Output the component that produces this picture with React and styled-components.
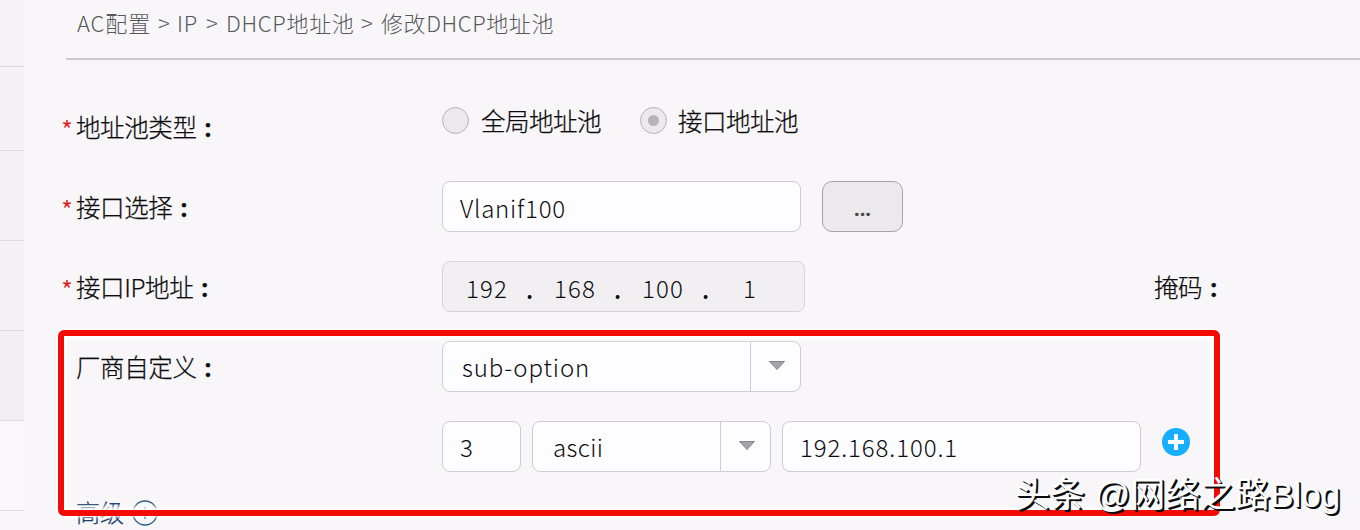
import * as React from 'react'
import styled, { createGlobalStyle } from "styled-components"

const GlobalStyle = createGlobalStyle`
* {box-sizing:border-box;}
body {margin:0; background-color:#f8f6f9; overflow:hidden; font-family:"Noto Sans CJK SC", sans-serif; font-weight:300; color:#0c0c0e;}
`;

const Page = styled.div`
display:flex;
position:relative;
width:1360px;
height:530px;
overflow:hidden;
`;

const Sidebar = styled.div`
flex:0 0 24px;
display:flex;
flex-direction:column;
`;

const SidebarItem = styled.div`
flex:0 0 ${props => props.$height}px;
background-color:${props => props.$color};
border-bottom:1px solid #dcdadd;
`;

const Main = styled.div`
flex:1;
min-width:0;
display:flex;
flex-direction:column;
padding-left:38px;
`;

const Breadcrumb = styled.div`
display:flex;
flex:none;
height:60px;
margin-left:4px;
padding:5px 0 0 11px;
border-bottom:2px solid #cbc9ce;
color:#58585c;
line-height:35px;
white-space:nowrap;
`;

const Crumb = styled.span`
flex:none;
width:${props => props.$width}px;
font-size:22px;
letter-spacing:${props => props.$spacing || 0}px;
`;

const Form = styled.div`
display:flex;
flex-direction:column;
gap:29px;
padding-top:41px;
`;

const Row = styled.div`
display:flex;
flex:none;
height:51px;
`;

const Label = styled.div`
display:flex;
flex:0 0 380px;
height:51px;
font-size:24.5px;
line-height:51px;
letter-spacing:-.4px;
-webkit-text-stroke:.25px currentColor;
white-space:nowrap;
`;

const Required = styled.span`
flex:0 0 14px;
padding-top:3px;
color:#e01818;
font-size:27px;
letter-spacing:0;
margin-left:-1px;
margin-right:1px;
`;

const Colon = styled.b`
font-weight:700;
font-family:"Noto Sans", sans-serif;
margin-left:8px;
padding-top:1px;
`;

const Radio = styled.div`
display:flex;
flex:none;
align-items:center;
height:27px;
margin-top:6px;
width:${props => props.$width}px;
font-size:24.5px;
letter-spacing:-.5px;
-webkit-text-stroke:.25px currentColor;
white-space:nowrap;
`;

const RadioDot = styled.i`
display:flex;
align-items:center;
justify-content:center;
width:27px;
height:27px;
margin-right:${props => props.$gap}px;
border:1px solid #b5b2b6;
border-radius:50%;
background-color:#ebe9ec;
&::after {content:""; width:11px; height:11px; border-radius:50%; background-color:${props => props.$checked ? "#b8b2b4" : "transparent"};}
`;

const Field = styled.div`
display:flex;
flex:none;
align-items:center;
width:${props => props.$width}px;
height:51px;
margin-right:${props => props.$gap || 0}px;
padding-left:${props => props.$pad || 17}px;
padding-top:${props => props.$drop || 0}px;
border:1px solid ${props => props.$disabled ? "#d5d3d8" : "#ceccd1"};
border-radius:8px;
background-color:${props => props.$disabled ? "#f1eff2" : "#fdfcfe"};
font-size:24px;
letter-spacing:${props => props.$spacing || 0}px;
white-space:nowrap;
`;

const IpPart = styled.span`
flex:none;
width:${props => props.$width}px;
`;

const IpDot = styled(IpPart)`
padding-top:3px;
font-weight:500;
`;

const Select = styled(Field)`
justify-content:space-between;
`;

const Arrow = styled.span`
display:flex;
align-items:center;
justify-content:center;
width:50px;
height:49px;
padding-bottom:1px;
padding-left:2px;
border-left:1px solid #d0ced3;
`;

const MoreButton = styled.button`
width:81px;
height:51px;
padding:3px 0 0;
border:1px solid #a5a3a7;
border-radius:10px;
background-color:#ebe9ec;
color:#48484c;
font:700 20px "Noto Sans", sans-serif;
`;

const AddIcon = styled.svg`
margin:7px 0 0 21px;
`;

const Advanced = styled.div`
display:flex;
align-items:center;
gap:8px;
height:36px;
margin-top:-6px;
padding-left:14px;
color:#173f6b;
font-size:24px;
line-height:34px;
-webkit-text-stroke:.25px currentColor;
span {padding-bottom:3px;}
`;

/* red highlight around the vendor options */
const Highlight = styled.div`
position:absolute;
left:58px;
top:330px;
width:1162px;
height:186px;
border:6px solid #f30b05;
border-radius:6px;
box-shadow:0 0 3px 1px #fff, inset 0 0 4px 3px #fff;
`;

const Watermark = styled.div`
position:absolute;
left:1015px;
top:471px;
font-family:"Liberation Sans", "Noto Sans CJK SC", sans-serif;
font-size:35px;
font-weight:400;
line-height:48px;
color:#fff;
text-shadow:2px 2px 0 #0c0c0c, 1px 1px 0 #0c0c0c;
white-space:nowrap;
`;

const Triangle = () => (
    <svg width="18" height="12" viewBox="0 0 18 12">
        <path d="M1.5 1.5H16.5L9 9.5Z" fill="#a5a4aa" stroke="#85858b" />
    </svg>
)

const sidebarItems = [
    { height: 67, color: "#f4f2f5" },
    { height: 84, color: "#f3f1f4" },
    { height: 90, color: "#f3f1f4" },
    { height: 90, color: "#f3f1f4" },
    { height: 90, color: "#f1eff1" },
    { height: 90, color: "#f9f7fa" },
]

const App = () => {

    return (
        <Page>
            <GlobalStyle />
            <Sidebar>
                {sidebarItems.map((item, i) => <SidebarItem key={i} $height={item.height} $color={item.color} />)}
            </Sidebar>
            <Main>
                <Breadcrumb>
                    <Crumb $width={81} $spacing={.9}>AC配置</Crumb>
                    <Crumb $width={19}>&gt;</Crumb>
                    <Crumb $width={29} $spacing={.7}>IP</Crumb>
                    <Crumb $width={20}>&gt;</Crumb>
                    <Crumb $width={135} $spacing={.7}>DHCP地址池</Crumb>
                    <Crumb $width={20}>&gt;</Crumb>
                    <Crumb $width={180} $spacing={.6}>修改DHCP地址池</Crumb>
                </Breadcrumb>
                <Form>
                    <Row>
                        <Label><Required>*</Required>地址池类型<Colon>:</Colon></Label>
                        <Radio $width={198}><RadioDot $gap={12} /><span>全局地址池</span></Radio>
                        <Radio $width={170}><RadioDot $checked $gap={11} /><span>接口地址池</span></Radio>
                    </Row>
                    <Row>
                        <Label><Required>*</Required>接口选择<Colon>:</Colon></Label>
                        <Field $width={359} $gap={21} $spacing={.8} $drop={1}>Vlanif100</Field>
                        <MoreButton>...</MoreButton>
                    </Row>
                    <Row>
                        <Label><Required>*</Required>接口IP地址<Colon>:</Colon></Label>
                        <Field $disabled $width={363} $gap={349} $pad={23} $drop={1} $spacing={1.1}>
                            <IpPart $width={60}>192</IpPart>
                            <IpDot $width={28}>.</IpDot>
                            <IpPart $width={60}>168</IpPart>
                            <IpDot $width={28}>.</IpDot>
                            <IpPart $width={60}>100</IpPart>
                            <IpDot $width={41}>.</IpDot>
                            <IpPart $width={20}>1</IpPart>
                        </Field>
                        <Label>掩码<Colon>:</Colon></Label>
                    </Row>
                    <Row>
                        <Label><Required />厂商自定义<Colon>:</Colon></Label>
                        <Select $width={359} $pad={19} $spacing={.9}>sub-option<Arrow><Triangle /></Arrow></Select>
                    </Row>
                    <Row>
                        <Label />
                        <Field $width={79} $gap={11}>3</Field>
                        <Select $width={239} $gap={11} $pad={20} $spacing={.4}>ascii<Arrow><Triangle /></Arrow></Select>
                        <Field $width={359} $spacing={.9}>192.168.100.1</Field>
                        <AddIcon width="28" height="28" viewBox="0 0 28 28">
                            <circle cx="14" cy="14" r="14" fill="#18aeff" />
                            <path d="M14 6V22M6 14H22" stroke="#fff" strokeWidth="4" />
                        </AddIcon>
                    </Row>
                    <Advanced>
                        <span>高级</span>
                        <svg width="26" height="26" viewBox="0 0 26 26" fill="none" stroke="#2f6085" strokeWidth="1.3">
                            <circle cx="13" cy="13" r="12" />
                            <path d="M13 7V19M7 13H19" />
                        </svg>
                    </Advanced>
                </Form>
            </Main>
            <Highlight />
            <Watermark>头条 @网络之路Blog</Watermark>
        </Page>
    )
}

export default App
